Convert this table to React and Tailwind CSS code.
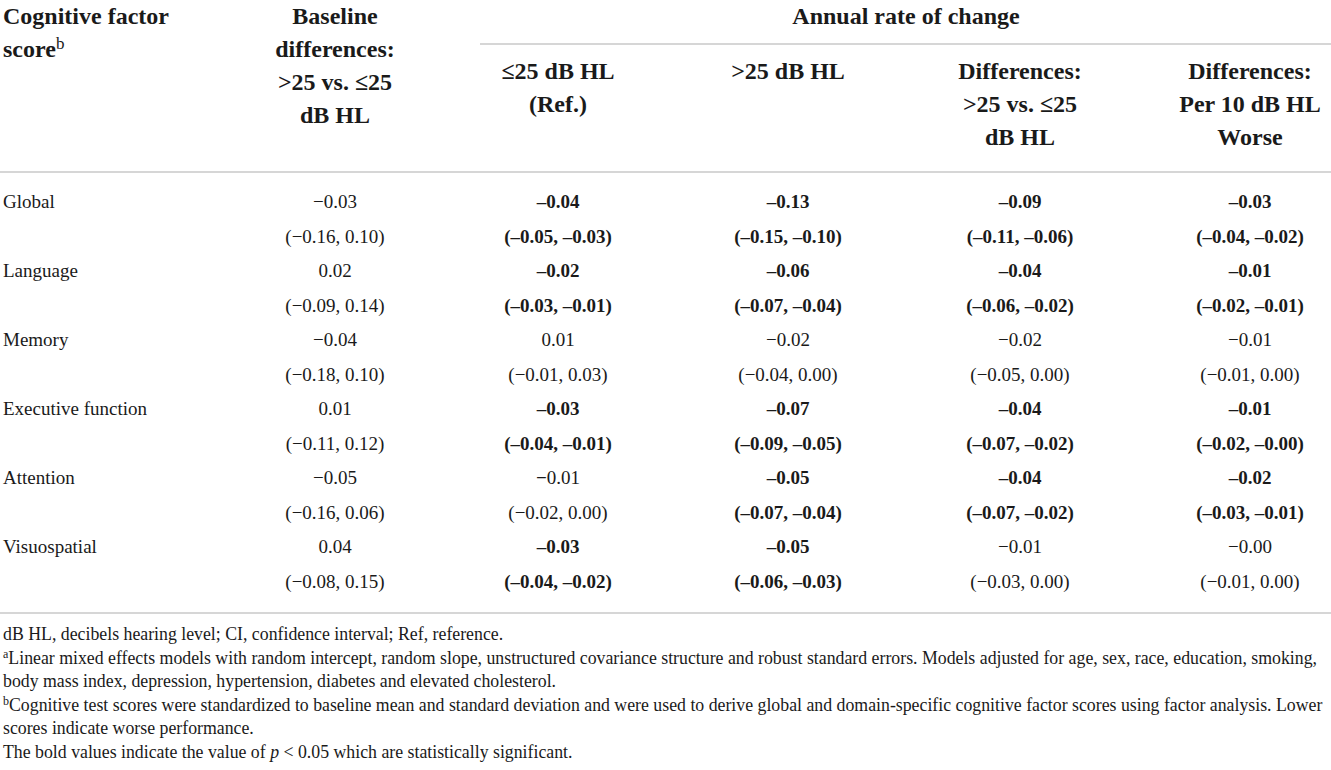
import React from 'react';

const COLS = 'grid grid-cols-[259px_152px_294px_166px_298px_162px]';

// each cell: [text, bold]
const ROWS = [
  { label: 'Global', est: [['−0.03'], ['–0.04', 1], ['–0.13', 1], ['–0.09', 1], ['–0.03', 1]], ci: [['(−0.16, 0.10)'], ['(–0.05, –0.03)', 1], ['(–0.15, –0.10)', 1], ['(–0.11, –0.06)', 1], ['(–0.04, –0.02)', 1]] },
  { label: 'Language', est: [['0.02'], ['–0.02', 1], ['–0.06', 1], ['–0.04', 1], ['–0.01', 1]], ci: [['(−0.09, 0.14)'], ['(–0.03, –0.01)', 1], ['(–0.07, –0.04)', 1], ['(–0.06, –0.02)', 1], ['(–0.02, –0.01)', 1]] },
  { label: 'Memory', est: [['−0.04'], ['0.01'], ['−0.02'], ['−0.02'], ['−0.01']], ci: [['(−0.18, 0.10)'], ['(−0.01, 0.03)'], ['(−0.04, 0.00)'], ['(−0.05, 0.00)'], ['(−0.01, 0.00)']] },
  { label: 'Executive function', est: [['0.01'], ['–0.03', 1], ['–0.07', 1], ['–0.04', 1], ['–0.01', 1]], ci: [['(−0.11, 0.12)'], ['(–0.04, –0.01)', 1], ['(–0.09, –0.05)', 1], ['(–0.07, –0.02)', 1], ['(–0.02, –0.00)', 1]] },
  { label: 'Attention', est: [['−0.05'], ['−0.01', 2], ['–0.05', 1], ['–0.04', 1], ['–0.02', 1]], ci: [['(−0.16, 0.06)'], ['(−0.02, 0.00)'], ['(–0.07, –0.04)', 1], ['(–0.07, –0.02)', 1], ['(–0.03, –0.01)', 1]] },
  { label: 'Visuospatial', est: [['0.04'], ['–0.03', 1], ['–0.05', 1], ['−0.01'], ['−0.00']], ci: [['(−0.08, 0.15)'], ['(–0.04, –0.02)', 1], ['(–0.06, –0.03)', 1], ['(−0.03, 0.00)'], ['(−0.01, 0.00)']] },
];

function Cell({ value }) {
  const [text, bold] = value;
  if (bold === 2) {
    // bold minus, regular digits
    return <div className="text-center"><span className="font-bold">−</span>{text.slice(1)}</div>;
  }
  return <div className={`text-center ${bold ? 'font-bold' : ''}`}>{text}</div>;
}

export default function App() {
  return (
    <div className="w-[1331px] min-h-[770px] bg-white text-[#1a1a1a] font-['Liberation_Serif',serif]">
      {/* Header */}
      <div className={`${COLS} content-start h-[173px] border-b-2 border-[#d6d6d6] text-[24px] font-bold leading-[33px]`}>
        <div className="row-span-3 pl-[3px]">
          Cognitive factor<br />score<span className="font-normal text-[17px] leading-none relative -top-[8px]">b</span>
        </div>
        <div className="row-span-3 text-center">
          Baseline<br />differences:<br />&gt;25 vs. ≤25<br />dB HL
        </div>
        <div className="col-span-4 text-center pl-[70px]">Annual rate of change</div>
        <div className="col-span-4 pl-[69px] pt-[10px]">
          <div className="h-[2px] bg-[#d6d6d6]" />
        </div>
        <div className="text-center pt-[10px]">≤25 dB HL<br />(Ref.)</div>
        <div className="text-center pt-[10px]">&gt;25 dB HL</div>
        <div className="text-center pt-[10px]">Differences:<br />&gt;25 vs. ≤25<br />dB HL</div>
        <div className="text-center pt-[10px]">Differences:<br />Per 10 dB HL<br />Worse</div>
      </div>

      {/* Body */}
      <div className={`${COLS} pt-[12px] pb-[13px] border-b-2 border-[#d6d6d6] text-[19px] leading-[34.5px]`}>
        {ROWS.map(r => (
          <React.Fragment key={r.label}>
            <div className="pl-[3px]">{r.label}</div>
            {r.est.map((v, i) => <Cell key={'e' + i} value={v} />)}
            <div />
            {r.ci.map((v, i) => <Cell key={'c' + i} value={v} />)}
          </React.Fragment>
        ))}
      </div>

      {/* Footnotes */}
      <div className="pt-[9px] pl-[3px] text-[17.8px] leading-[23.5px] whitespace-nowrap">
        <p>dB HL, decibels hearing level; CI, confidence interval; Ref, reference.</p>
        <p>
          <span className="text-[12px] leading-none relative -top-[6px]">a</span>Linear mixed effects models with random intercept, random slope, unstructured covariance structure and robust standard errors. Models adjusted for age, sex, race, education, smoking,
          <br />body mass index, depression, hypertension, diabetes and elevated cholesterol.
        </p>
        <p>
          <span className="text-[12px] leading-none relative -top-[6px]">b</span>Cognitive test scores were standardized to baseline mean and standard deviation and were used to derive global and domain-specific cognitive factor scores using factor analysis. Lower
          <br />scores indicate worse performance.
        </p>
        <p>The bold values indicate the value of <i>p</i> &lt; 0.05 which are statistically significant.</p>
      </div>
    </div>
  );
}
